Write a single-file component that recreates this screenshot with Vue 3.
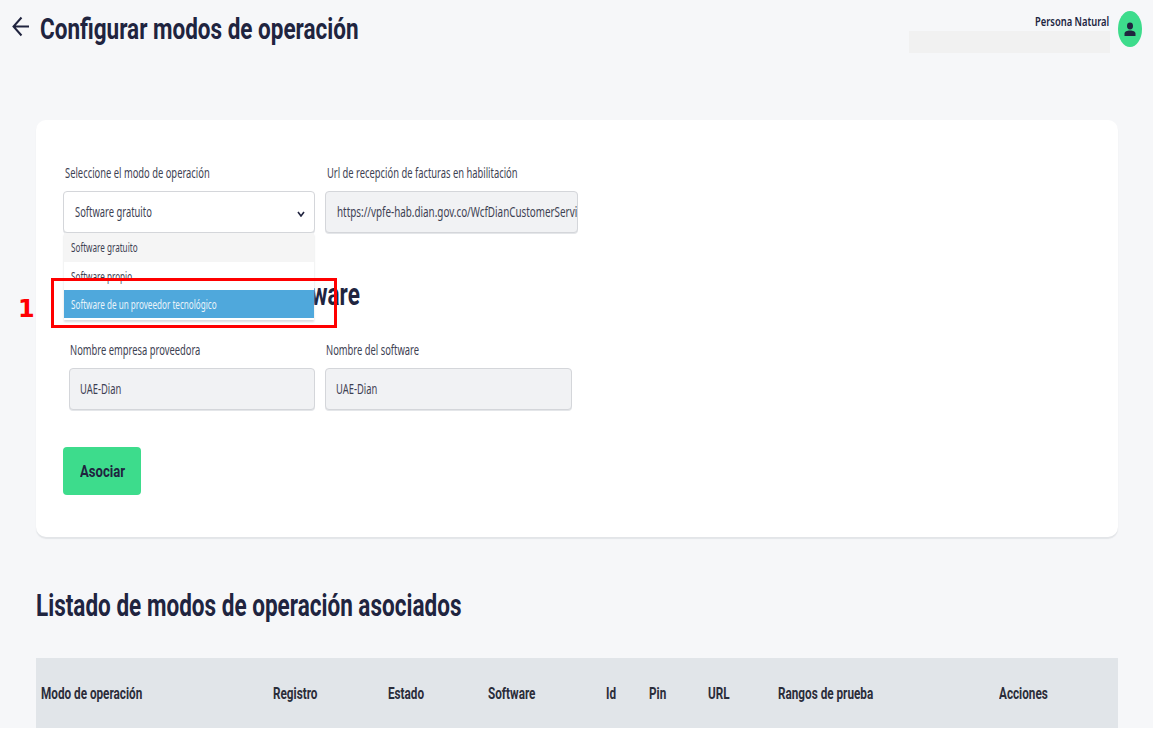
<script setup>
const options = [
  { label: 'Software gratuito', cls: 'first' },
  { label: 'Software propio', cls: '' },
  { label: 'Software de un proveedor tecnológico', cls: 'active' },
];

const columns = ['Modo de operación', 'Registro', 'Estado', 'Software', 'Id', 'Pin', 'URL', 'Rangos de prueba', 'Acciones'];
const colWidths = [232, 115, 100, 118, 43, 59, 70, 221, 124];
</script>

<template>
  <div class="page">
    <header class="top">
      <div class="top-left">
        <svg class="back" width="18" height="21" viewBox="0 0 18 21" fill="none" stroke="#20243f" stroke-width="2">
          <path d="M17 10.5H2M9.5 1.5L1.5 10.5L9.5 19.5" />
        </svg>
        <h1><span class="sq title-sq">Configurar modos de operación</span></h1>
      </div>
      <div class="user">
        <div class="user-text">
          <div class="user-name"><span class="sq label-sq">Persona Natural</span></div>
          <div class="user-bar"></div>
        </div>
        <div class="avatar">
          <svg width="12" height="15" viewBox="0 0 12 15" fill="#20243f">
            <ellipse cx="6" cy="4" rx="3" ry="3.4" />
            <path d="M0.5 14V11.8C0.5 9.8 3 8.6 6 8.6C9 8.6 11.5 9.8 11.5 11.8V14Z" />
          </svg>
        </div>
      </div>
    </header>

    <section class="card">
      <div class="row first-row">
        <div class="field select-field">
          <label><span class="sq label-sq">Seleccione el modo de operación</span></label>
          <div class="select">
            <span class="sq label-sq">Software gratuito</span>
            <svg class="chevron" width="8" height="6" viewBox="0 0 8 6" fill="none" stroke="#20243f" stroke-width="1.6">
              <path d="M1 1L4 5L7 1" />
            </svg>
          </div>
          <ul class="dropdown">
            <li v-for="opt in options" :key="opt.label" :class="opt.cls"><span class="sq label-sq">{{ opt.label }}</span></li>
          </ul>
        </div>
        <div class="field url-field">
          <label><span class="sq label-sq">Url de recepción de facturas en habilitación</span></label>
          <div class="input"><span class="sq label-sq url-value">https://vpfe-hab.dian.gov.co/WcfDianCustomerServi</span></div>
        </div>
      </div>

      <h2 class="section-title"><span class="sq head-sq end-sq">Información de software</span></h2>

      <div class="row second-row">
        <div class="field wide">
          <label><span class="sq label-sq">Nombre empresa proveedora</span></label>
          <div class="input"><span class="sq label-sq">UAE-Dian</span></div>
        </div>
        <div class="field narrow">
          <label><span class="sq label-sq">Nombre del software</span></label>
          <div class="input"><span class="sq label-sq">UAE-Dian</span></div>
        </div>
      </div>

      <button class="btn"><span class="sq btn-sq">Asociar</span></button>
    </section>

    <h2 class="list-title"><span class="sq head-sq">Listado de modos de operación asociados</span></h2>

    <table class="table">
      <colgroup>
        <col v-for="(w, i) in colWidths" :key="i" :style="{ width: w + 'px' }" />
      </colgroup>
      <thead>
        <tr>
          <th v-for="col in columns" :key="col"><span class="sq th-sq">{{ col }}</span></th>
        </tr>
      </thead>
    </table>

    <div class="marker-box"></div>
    <div class="marker-num">1</div>
  </div>
</template>

<style>
html, body {
  background: #fff;
}
</style>

<style scoped>
.page {
  position: relative;
  height: 728px;
  overflow: hidden;
  background: #f6f7f9;
  padding: 0 35px 0 36px;
  box-sizing: border-box;
  color: #20243f;
}

/* the reference is squeezed horizontally, so the text is too */
.sq {
  display: inline-block;
  white-space: nowrap;
  transform-origin: left center;
  font-family: Roboto, sans-serif;
  font-weight: 700;
}

.title-sq {
  transform: scaleX(0.75);
}

.head-sq {
  transform: scaleX(0.727);
}

.end-sq {
  transform-origin: right center;
}

.btn-sq {
  transform: scaleX(0.77);
}

.th-sq {
  transform: scaleX(0.69);
}

.label-sq {
  font-family: "Noto Sans", sans-serif;
  font-weight: 400;
  transform: scaleX(0.625);
}

.url-value {
  transform: scaleX(0.657);
}

.top {
  display: flex;
  justify-content: space-between;
  height: 120px;
  margin-left: -36px;
  margin-right: -24px;
}

.top-left {
  display: flex;
  align-items: flex-start;
  padding: 15px 0 0 12px;
}

.back {
  margin-top: 1px;
  margin-right: 10px;
}

h1 {
  margin: 0;
  font-size: 30px;
  line-height: 28px;
  width: 320px;
}

.user {
  display: flex;
  align-items: flex-start;
  gap: 8px;
  padding-top: 11px;
}

.user-text {
  width: 201px;
  display: flex;
  flex-direction: column;
  align-items: flex-end;
}

.user-name {
  height: 20px;
  line-height: 20px;
  font-size: 13px;
  width: 75px;
}

.user-name .label-sq {
  font-weight: 600;
  transform: scaleX(0.72);
}

.user-bar {
  width: 201px;
  height: 22px;
  background: #f1f1f1;
}

.avatar {
  width: 24px;
  height: 36px;
  border-radius: 50%;
  background: #3ddc8c;
  display: flex;
  align-items: center;
  justify-content: center;
}

.card {
  height: 417px;
  background: #fff;
  border-radius: 10px;
  box-shadow: 0 2px 1px #e3e5e8;
  padding: 44px 0 0 27px;
  box-sizing: border-box;
}

.row {
  display: flex;
  gap: 10px;
}

.field {
  position: relative;
  width: 252px;
}

label {
  display: block;
  height: 27px;
  line-height: 16px;
  padding-left: 2px;
  font-size: 15px;
  color: #3d4152;
}

.select,
.input {
  height: 42px;
  line-height: 38px;
  box-sizing: border-box;
  border: 1px solid #d4d6da;
  border-radius: 4px;
  box-shadow: 0 1px 0 #e4e6e9;
  padding-left: 11px;
  font-size: 15px;
  color: #3d4152;
  overflow: hidden;
}

.select {
  position: relative;
  background: #fff;
}

.input {
  background: #f1f2f4;
}

.second-row .input {
  padding-left: 10px;
}

.chevron {
  position: absolute;
  right: 9px;
  top: 19px;
}

.url-field {
  width: 253px;
}

.dropdown {
  position: absolute;
  z-index: 2;
  top: 69px;
  left: 1px;
  width: 250px;
  height: 87px;
  margin: 0;
  padding: 0;
  list-style: none;
  background: #fff;
  box-shadow: 0 2px 2px #d9dbde;
}

.dropdown li {
  height: 28px;
  line-height: 28px;
  padding-left: 7px;
  font-size: 13px;
  color: #3d4152;
}

.dropdown li.first {
  height: 29px;
  background: #f5f5f5;
}

.dropdown li.active {
  background: #4fa8dc;
  color: #eaf4fa;
}

.section-title {
  margin: 47px 0 0;
  height: 30px;
  line-height: 30px;
  font-size: 31px;
  width: 297px;
  display: flex;
  justify-content: flex-end;
}

.second-row {
  margin-top: 31px;
  padding-left: 6px;
}

.wide {
  width: 246px;
}

.narrow {
  width: 247px;
}

.second-row label {
  padding-left: 1px;
}

.btn {
  display: block;
  margin-top: 37px;
  width: 78px;
  height: 48px;
  padding: 0 0 0 17px;
  text-align: left;
  border: none;
  border-radius: 4px;
  background: #3ddc8c;
  color: #20243f;
  font-size: 17px;
}

.list-title {
  margin: 53px 0 0;
  height: 32px;
  line-height: 32px;
  font-size: 31px;
}

.table {
  width: 1082px;
  margin-top: 36px;
  table-layout: fixed;
  border-collapse: collapse;
  background: #e1e5e9;
}

.table th {
  height: 70px;
  padding: 0 0 0 5px;
  text-align: left;
  font-size: 17px;
  color: #2b2d3a;
}

.marker-box {
  position: absolute;
  z-index: 3;
  left: 51px;
  top: 278px;
  width: 286px;
  height: 50px;
  box-sizing: border-box;
  border: 3px solid #f00;
}

.marker-num {
  position: absolute;
  z-index: 3;
  left: 18px;
  top: 294px;
  font-family: "DejaVu Sans", sans-serif;
  font-weight: 700;
  font-size: 24px;
  line-height: 30px;
  color: #f00;
}
</style>
